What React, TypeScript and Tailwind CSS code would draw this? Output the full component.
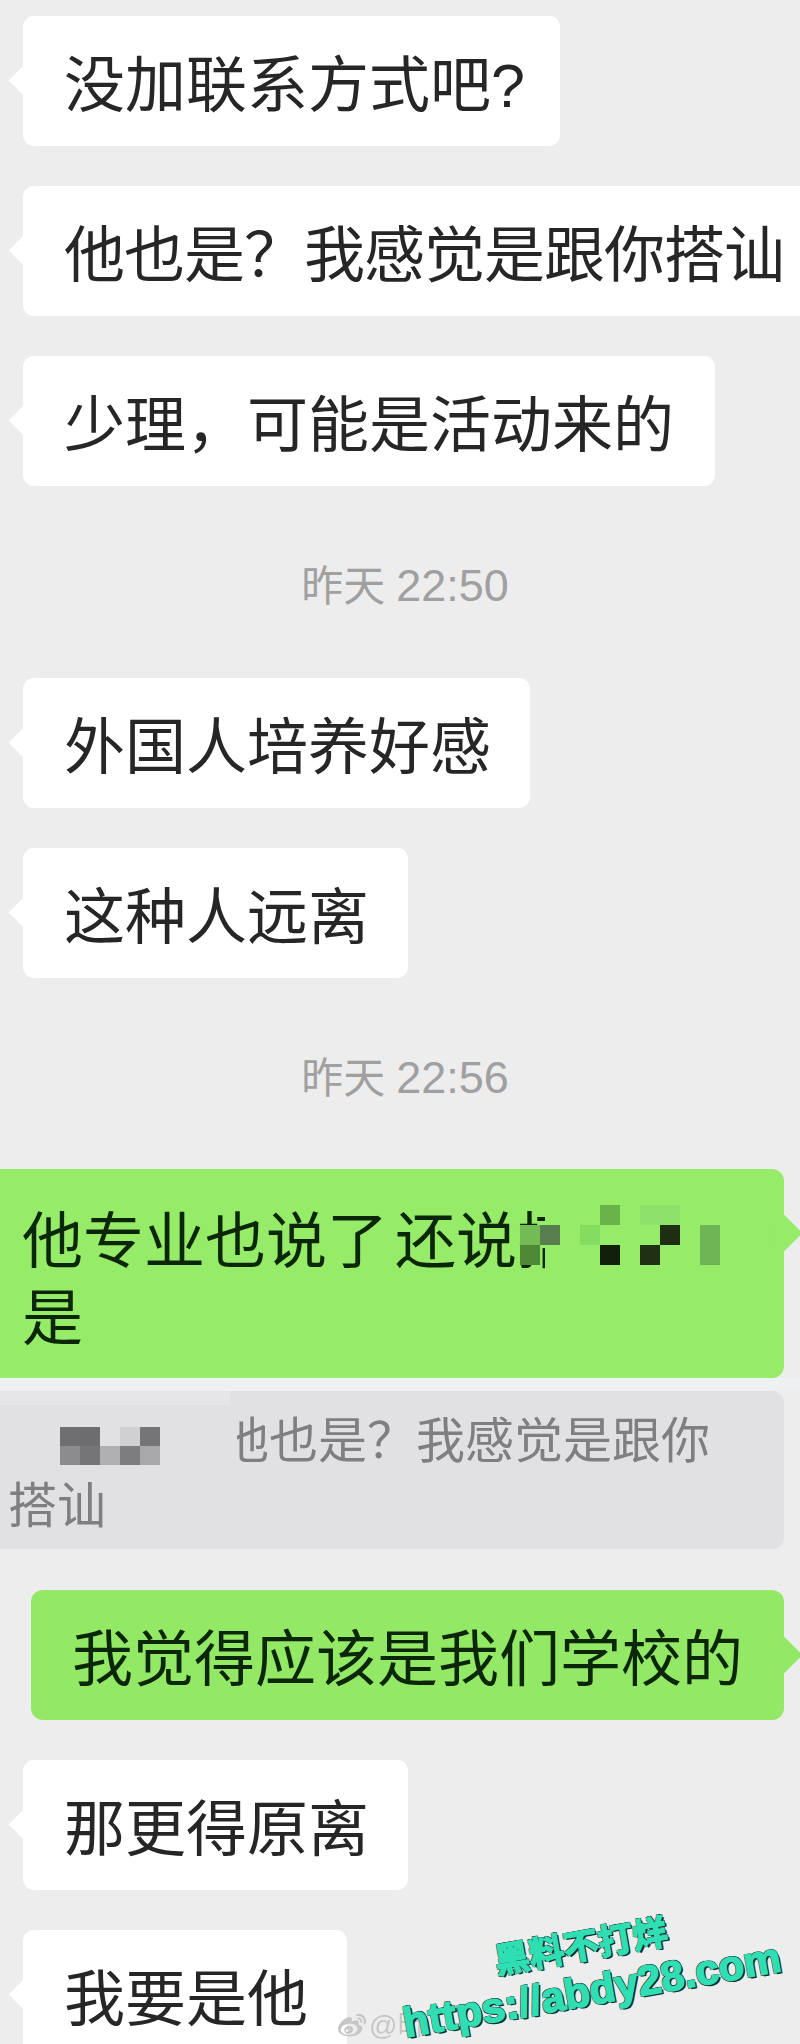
import { FaWeibo } from 'react-icons/fa';

const cjk = "font-['Liberation_Sans','Noto_Sans_CJK_SC',sans-serif]";

type BubbleProps = {
  text: string;
  className?: string;
};

function Incoming({ text, className = '' }: BubbleProps) {
  return (
    <div className={`relative ml-[23px] h-[130px] flex items-center pl-[41px] pt-[10px] bg-white rounded-[11px] text-[61px] leading-none text-[#262626] whitespace-nowrap ${className}`}>
      <span className="absolute left-[-10px] top-[54px] w-[21px] h-[21px] rotate-45 bg-white" />
      {text}
    </div>
  );
}

function Time({ text }: { text: string }) {
  return (
    <div className="h-[68px] pl-[10px] pt-[4px] flex items-center justify-center gap-[11px] text-[#a0a0a0]">
      <span className="text-[42px]">昨天</span>
      <span className="text-[45px]">{text}</span>
    </div>
  );
}

type Cell = [number, number, string];

// 打码的方块
function Mosaic({ cells, width, height, cellH, className }: { cells: Cell[]; width: number; height: number; cellH: number; className: string }) {
  return (
    <svg width={width} height={height} className={className}>
      {cells.map(([x, y, fill], i) => (
        <rect key={i} x={x} y={y} width="20" height={cellH} fill={fill} />
      ))}
    </svg>
  );
}

const greenCells: Cell[] = [
  [0, 20, '#75bb55'], [20, 20, '#5a7f4f'], [0, 40, '#4e8a35'],
  [60, 20, '#85dd60'], [80, 0, '#6ab24a'], [80, 40, '#0f1f0a'],
  [120, 0, '#8ee26b'], [140, 0, '#8ee26b'], [140, 20, '#1d2e13'],
  [120, 40, '#1f3015'], [180, 20, '#6fb555'], [180, 40, '#6fb555'],
];

const greyCells: Cell[] = [
  [0, 0, '#6f6f71'], [20, 0, '#6d6d6f'], [0, 19, '#8c8c8e'], [20, 19, '#757577'],
  [40, 19, '#b0b0b2'], [60, 0, '#d0d0d2'], [80, 0, '#757577'], [60, 19, '#7d7d7f'], [80, 19, '#a8a8aa'],
];

export default function App() {
  return (
    <div className={`relative w-[800px] h-[2044px] overflow-hidden bg-[#ededee] pt-4 ${cjk}`}>
      <div className="flex flex-col gap-10">
        <Incoming text="没加联系方式吧?" className="w-[537px]" />
        <Incoming text="他也是？我感觉是跟你搭讪" className="w-[800px] tracking-[-1px]" />
        <Incoming text="少理，可能是活动来的" className="w-[692px]" />
      </div>
      <div className="mt-[64px]"><Time text="22:50" /></div>
      <div className="mt-[60px] flex flex-col gap-10">
        <Incoming text="外国人培养好感" className="w-[507px]" />
        <Incoming text="这种人远离" className="w-[385px]" />
      </div>
      <div className="mt-[64px]"><Time text="22:56" /></div>

      <div className="relative mt-[59px] w-[784px] h-[209px] bg-[#96eb69] rounded-r-[12px] pl-[22px] pt-[35px] text-[61px] leading-[77px] text-[#0c2608]">
        <span className="absolute right-[-13px] top-[51px] w-[26px] h-[26px] rotate-45 bg-[#96eb69]" />
        <div className="flex whitespace-nowrap">
          <span className="[word-spacing:-10px]">他专业也说了 还说</span>
          <span className="w-[28px] overflow-hidden">搭</span>
        </div>
        <div>是</div>
        <Mosaic cells={greenCells} width={200} height={60} cellH={20} className="absolute left-[520px] top-[36px]" />
      </div>

      <div className="h-[13px] w-[800px] bg-[#eef1f1]" />

      <div className="relative w-[784px] h-[158px] bg-[#e1e1e3] rounded-r-[12px] pl-[8px] pt-[18px] text-[49px] leading-[65px] text-[#7f7f81]">
        <span className="absolute left-0 top-0 w-[230px] h-[14px] bg-[#e6e6e8]" />
        <div className="whitespace-nowrap pl-[212px]">他也是？我感觉是跟你</div>
        <div>搭讪</div>
        <span className="absolute left-[214px] top-[20px] w-[23px] h-[56px] bg-[#e1e1e3]" />
        <Mosaic cells={greyCells} width={100} height={38} cellH={19} className="absolute left-[60px] top-[36px]" />
      </div>

      <div className="relative mt-[41px] ml-[31px] w-[753px] h-[130px] bg-[#93e866] rounded-[12px] flex items-center pl-[41px] pt-[10px] text-[61px] leading-none text-[#0c2608] whitespace-nowrap">
        <span className="absolute right-[-13px] top-[52px] w-[26px] h-[26px] rotate-45 bg-[#93e866]" />
        我觉得应该是我们学校的
      </div>

      <div className="mt-10 flex flex-col gap-10">
        <Incoming text="那更得原离" className="w-[385px]" />
        <Incoming text="我要是他" className="w-[324px]" />
      </div>

      {/* 微博水印 */}
      <div className="absolute left-[338px] top-[2012px] flex items-center gap-[3px] text-[28px] leading-none text-[#c6c6c8] blur-[0.6px]">
        <FaWeibo size={28} />
        <span>@昕</span>
      </div>

      {/* 右下角站点水印 */}
      <div className="absolute left-[404px] top-[1958px] w-[390px] h-[90px] -rotate-[10deg] origin-bottom-left text-center font-bold text-[#2fdfb3] [-webkit-text-stroke:1.5px_#2fdfb3] [text-shadow:2px_2px_0_#0d2b2b,-1px_-1px_0_#0d2b2b,1px_-1px_0_#0d2b2b,-1px_1px_0_#0d2b2b]">
        <div className="text-[35px] leading-[42px] pr-[6px]">黑料不打烊</div>
        <div className="text-[42px] leading-[48px] whitespace-nowrap">https://abdy28.com</div>
      </div>
    </div>
  );
}
